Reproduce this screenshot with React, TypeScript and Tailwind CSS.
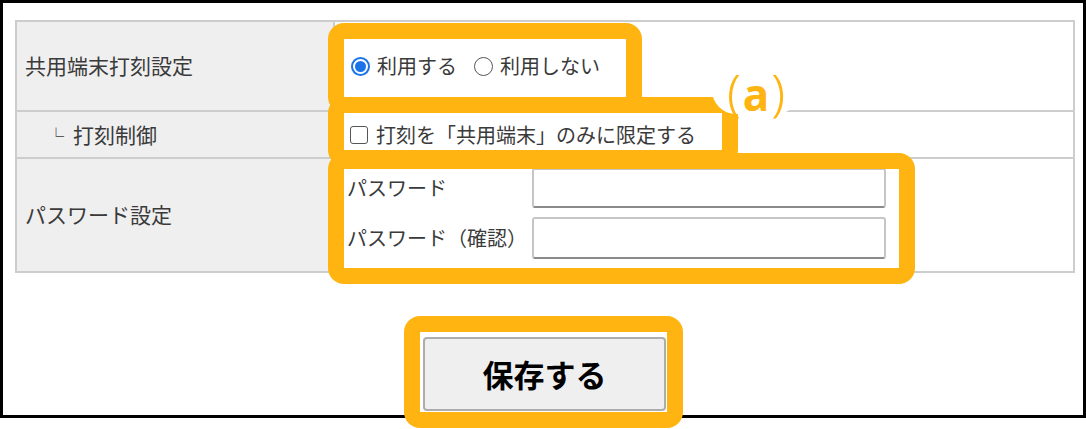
const Radio: React.FC<{ checked?: boolean }> = ({ checked }) =>
  checked ? (
    <span className="w-[19px] h-[19px] rounded-full border-2 border-[#1a73e8] flex items-center justify-center shrink-0">
      <span className="w-[11px] h-[11px] rounded-full bg-[#1a73e8]" />
    </span>
  ) : (
    <span className="w-[19px] h-[19px] rounded-full border-[1.5px] border-[#555] shrink-0" />
  );

const App: React.FC = () => {
  return (
    <div className="relative w-[1086px] h-[429px] bg-white overflow-hidden font-['Noto_Sans_CJK_JP','Noto_Sans',sans-serif] text-[#3a3a3a]">
      <div className="w-[1086px] h-[418px] border-[3px] border-black">
        {/* settings table */}
        <div className="mt-[17px] ml-[12px] w-[1060px] border-2 border-[#cdcdcd]">
          <div className="flex h-[88px]">
            <div className="w-[318px] bg-[#efefef] border-r-2 border-[#cdcdcd] flex items-center pl-[8px] text-[21px]">
              共用端末打刻設定
            </div>
            <div className="flex-1 flex items-center pl-[16px] text-[20px]">
              <Radio checked />
              <span className="ml-[7px]">利用する</span>
              <span className="ml-[17px]" />
              <Radio />
              <span className="ml-[7px]">利用しない</span>
            </div>
          </div>
          <div className="flex h-[47px] border-t-2 border-[#cdcdcd]">
            <div className="w-[318px] bg-[#efefef] border-r-2 border-[#cdcdcd] flex items-center pl-[31px] text-[21px]">
              <span className="text-[16px] mr-[9px]">└</span>
              打刻制御
            </div>
            <div className="flex-1 flex items-center pl-[15px] text-[20px]">
              <span className="w-[18px] h-[18px] rounded-[3px] border-[1.5px] border-[#555] shrink-0" />
              <span className="ml-[8px]">打刻を「共用端末」のみに限定する</span>
            </div>
          </div>
          <div className="flex h-[114px] border-t-2 border-[#cdcdcd]">
            <div className="w-[318px] bg-[#efefef] border-r-2 border-[#cdcdcd] flex items-center pl-[8px] text-[21px]">
              パスワード設定
            </div>
            <div className="flex-1 flex flex-col gap-[9px] pt-[9px] pl-[12px] text-[20px]">
              <div className="flex items-center">
                <span className="w-[185px]">パスワード</span>
                <div className="w-[354px] h-[40px] rounded-[3px] border-2 border-[#c6c6c6] border-b-[#8a8a8a] bg-white" />
              </div>
              <div className="flex items-center">
                <span className="w-[185px]">パスワード（確認）</span>
                <div className="w-[354px] h-[42px] rounded-[3px] border-2 border-[#c6c6c6] border-b-[#8a8a8a] bg-white" />
              </div>
            </div>
          </div>
        </div>

        <div className="flex justify-center pl-[3px] mt-[64px]">
          <button className="w-[243px] h-[74px] rounded-[4px] border-2 border-[#adadad] bg-[#efefef] text-[31px] font-bold text-black">
            保存する
          </button>
        </div>
      </div>

      {/* annotation highlights */}
      <div className="absolute left-[328px] top-[23px] w-[314px] h-[90px] border-[16px] border-[#ffb412] rounded-[16px]" />
      <div className="absolute left-[328px] top-[97px] w-[410px] h-[69px] border-[16px] border-[#ffb412] rounded-[16px]" />
      <div className="absolute left-[328px] top-[153px] w-[587px] h-[131px] border-[16px] border-[#ffb412] rounded-[16px]" />
      <div className="absolute left-[404px] top-[316px] w-[279px] h-[112px] border-[16px] border-[#ffb412] rounded-[16px]" />
      <div className="absolute left-[712px] top-[52px] w-[88px] h-[62px] bg-white rounded-[24px] flex items-baseline justify-center pt-[15px] font-['Noto_Sans',sans-serif] text-[#ffb412] leading-none">
        <span className="text-[50px] font-light">(</span>
        <span className="text-[44px] font-bold mx-[2px]">a</span>
        <span className="text-[50px] font-light">)</span>
      </div>
    </div>
  );
};

export default App;
